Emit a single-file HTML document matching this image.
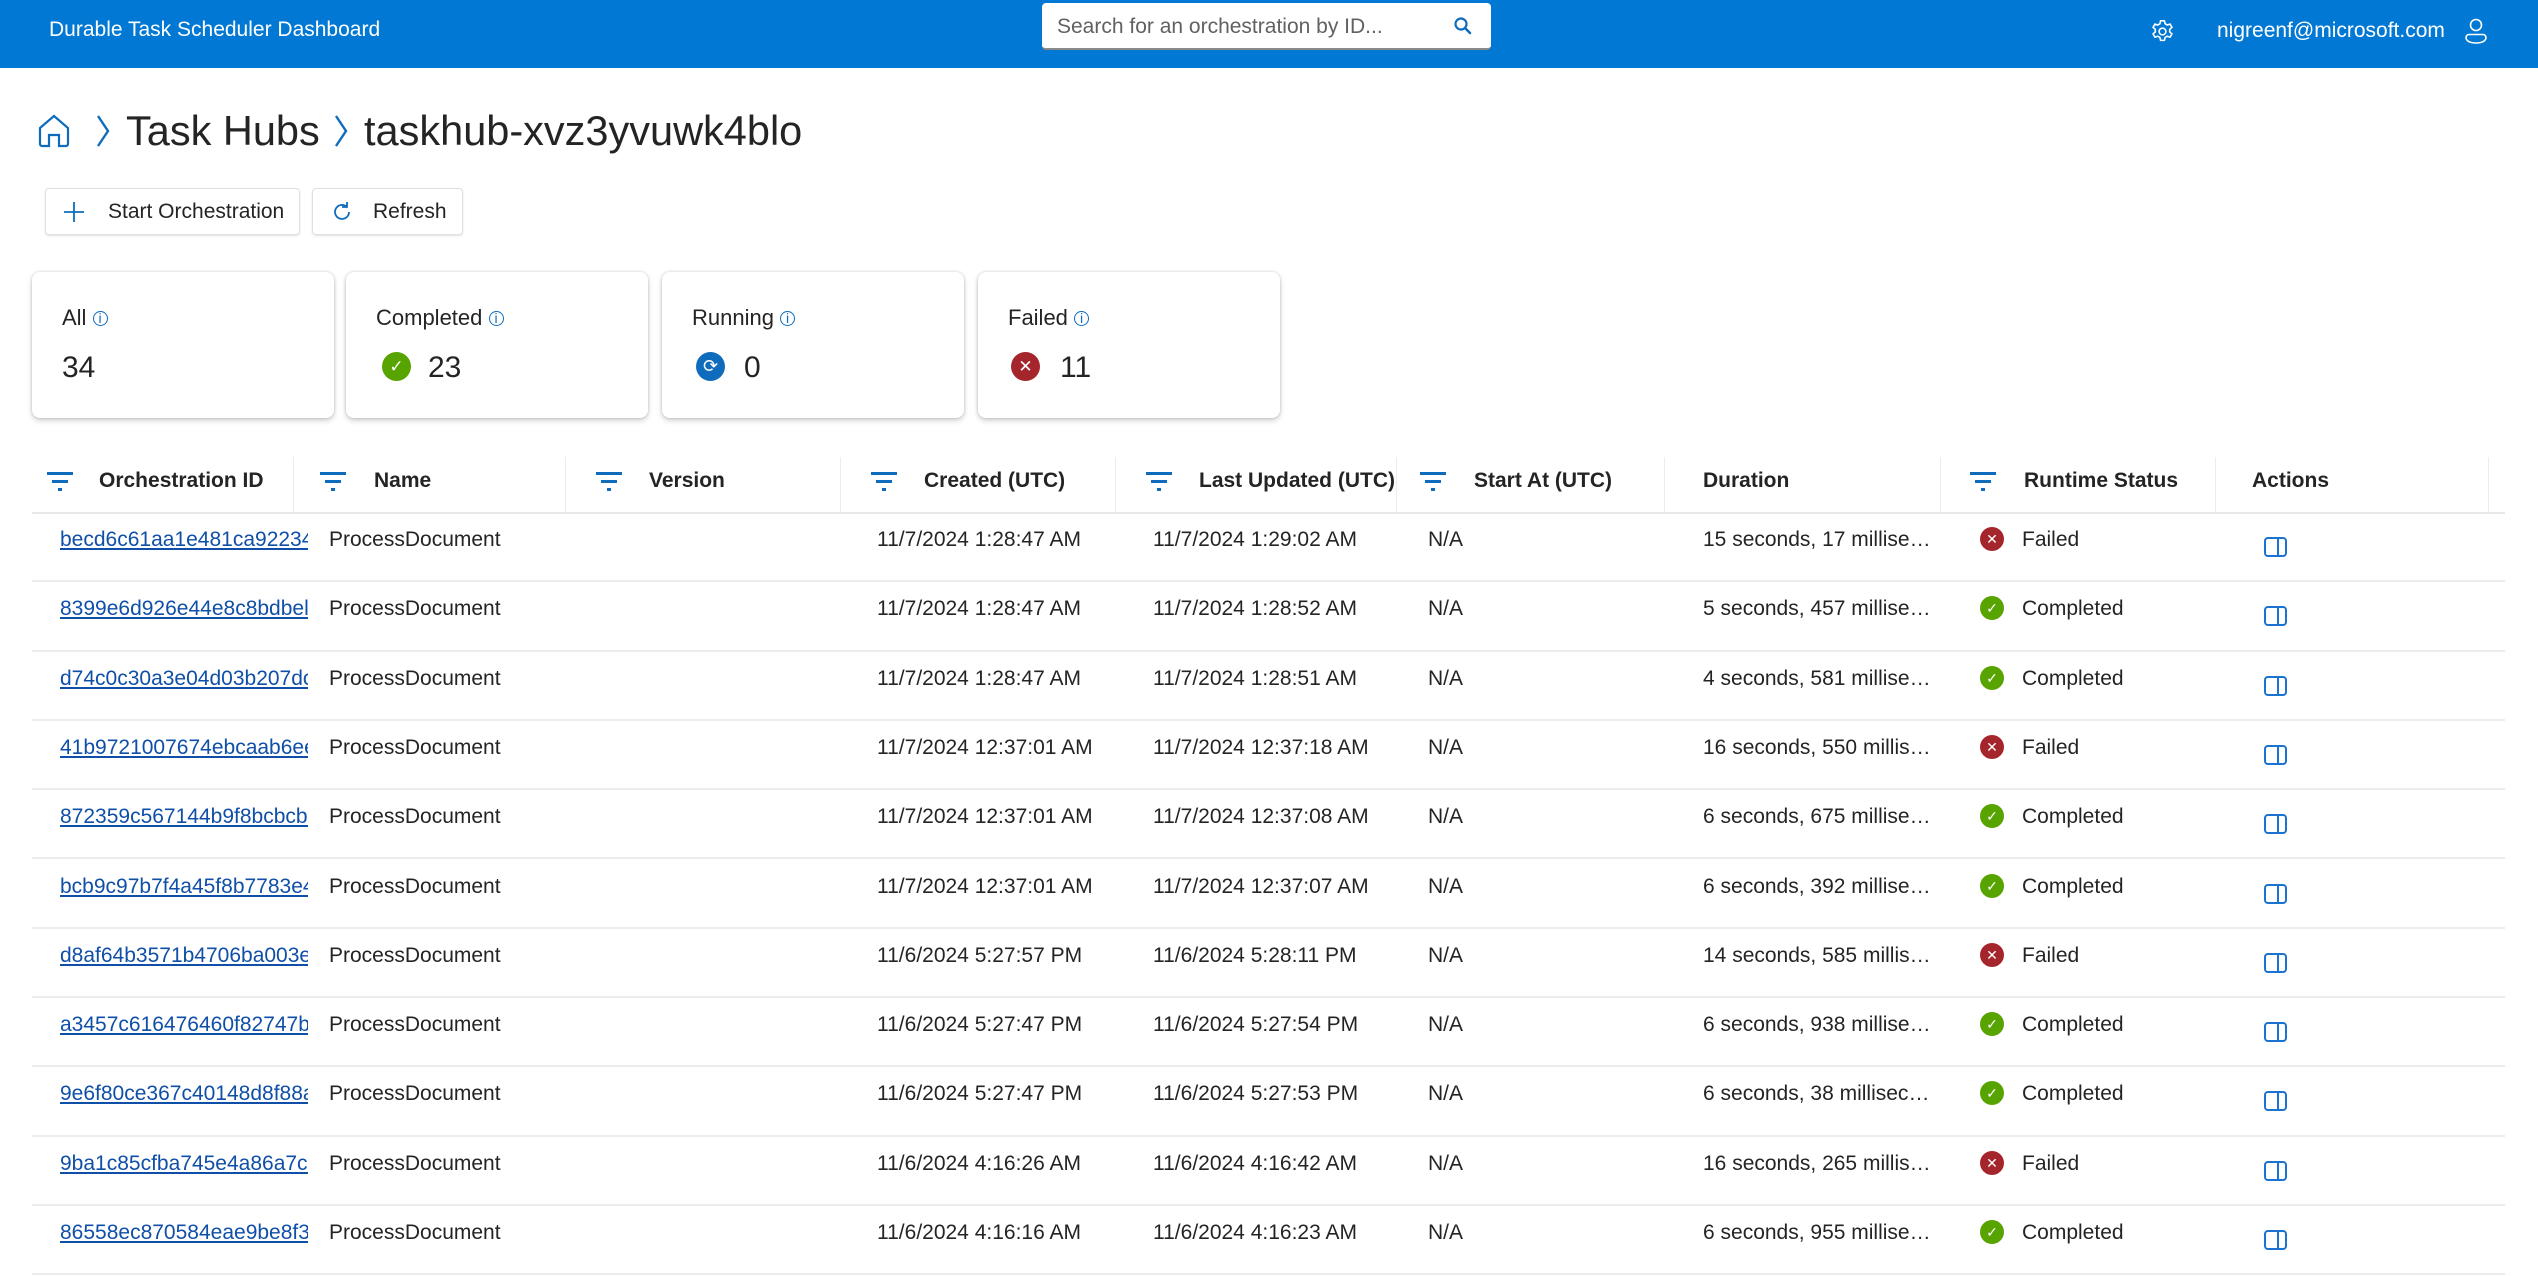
<!DOCTYPE html>
<html><head><meta charset="utf-8"><style>
*{box-sizing:border-box;margin:0;padding:0}
body{width:2538px;height:1276px;overflow:hidden;background:#fff;font-family:"Liberation Sans",Arial,sans-serif;color:#242424;position:relative}
.a{position:absolute;white-space:nowrap}
.hdr{position:absolute;left:0;top:0;width:2538px;height:68px;background:#0078d4}
.card{position:absolute;top:272px;width:302px;height:146px;background:#fff;border-radius:8px;box-shadow:0 0 3px rgba(0,0,0,.18),0 3px 6px rgba(0,0,0,.16)}
.card .l{position:absolute;left:30px;top:33px;font-size:22px}
.card .v{position:absolute;left:30px;top:79px;font-size:30px}
.btn{position:absolute;top:188px;height:47px;border:1px solid #e0e0e0;border-radius:4px;box-shadow:0 1px 2px rgba(0,0,0,.12);font-size:21px;line-height:45px}
.th{position:absolute;top:469px;font-size:21px;font-weight:bold}
.sep{position:absolute;top:457px;width:1px;height:56px;background:#ececec}
.row{position:absolute;left:32px;width:2473px;height:69.3px;border-bottom:2px solid #ececec}
.c{position:absolute;top:15px;font-size:21px;white-space:nowrap;overflow:hidden}
.id{left:28px;width:248px;color:#0f4fa8;text-decoration:underline}
.dur{left:1671px;width:228px;text-overflow:ellipsis}
.st{position:absolute;left:1948px;top:14px;width:24px;height:24px;border-radius:50%}
.ok{background:#57a300}.bad{background:#a4262c}
.act{position:absolute;left:2232px;top:24px;width:23px;height:20px;border:2px solid #1a73d0;border-radius:4px}
.act:after{content:"";position:absolute;left:11px;top:0;width:2px;height:16px;background:#1a73d0}
.st:after{position:absolute;left:0;top:0;width:24px;height:24px;color:#fff;font-size:14px;text-align:center;line-height:24px}
.ok:after{content:"✓"}.bad:after{content:"✕"}
</style></head><body>
<div class="hdr"></div>
<div class="a" style="left:49px;top:18px;font-size:21px;color:#fff">Durable Task Scheduler Dashboard</div>
<div class="a" style="left:1042px;top:3px;width:449px;height:47px;background:#fff;border-radius:4px;border-bottom:2px solid #8a8a8a"></div>
<div class="a" style="left:1057px;top:15px;font-size:21px;color:#616161">Search for an orchestration by ID...</div>
<svg class="a" style="left:1453px;top:16px" width="20" height="20" viewBox="0 0 20 20"><circle cx="8" cy="8" r="5.5" fill="none" stroke="#0f6cbd" stroke-width="2.2"/><path d="M12 12l5 5" stroke="#0f6cbd" stroke-width="2.5" stroke-linecap="round"/></svg>
<svg class="a" style="left:2149px;top:18px" width="27" height="27" viewBox="0 0 24 24" fill="none" stroke="#fff" stroke-width="1.4"><circle cx="12" cy="12" r="3"/><path d="M10.3 2.5h3.4l.6 2.6 1.9 1.1 2.5-.8 1.7 2.9-2 1.8v2.2l2 1.8-1.7 2.9-2.5-.8-1.9 1.1-.6 2.6h-3.4l-.6-2.6-1.9-1.1-2.5.8-1.7-2.9 2-1.8v-2.2l-2-1.8 1.7-2.9 2.5.8 1.9-1.1z"/></svg>
<div class="a" style="left:2217px;top:19px;font-size:21px;color:#fff">nigreenf@microsoft.com</div>
<svg class="a" style="left:2463px;top:17px" width="26" height="28" viewBox="0 0 26 28" fill="none" stroke="#fff" stroke-width="1.6"><circle cx="13" cy="8" r="5.5"/><path d="M3 20.5a3 3 0 0 1 3-3h14a3 3 0 0 1 3 3c0 3.5-4 5.5-10 5.5S3 24 3 20.5z"/></svg>

<svg class="a" style="left:37px;top:113px" width="34" height="36" viewBox="0 0 34 36" fill="none" stroke="#0f6cbd" stroke-width="2.2"><path d="M3 15L17 3l14 12v16a2 2 0 0 1-2 2h-7V22h-10v11H5a2 2 0 0 1-2-2z"/></svg>
<svg class="a" style="left:95px;top:114px" width="16" height="34" viewBox="0 0 16 34"><path d="M3 2l10 15-10 15" fill="none" stroke="#0f6cbd" stroke-width="2.4"/></svg>
<div class="a" style="left:126px;top:107px;font-size:41.5px">Task Hubs</div>
<svg class="a" style="left:333px;top:114px" width="16" height="34" viewBox="0 0 16 34"><path d="M3 2l10 15-10 15" fill="none" stroke="#0f6cbd" stroke-width="2.4"/></svg>
<div class="a" style="left:364px;top:107px;font-size:41.5px">taskhub-xvz3yvuwk4blo</div>

<div class="btn" style="left:45px;width:255px"><svg class="a" style="left:16px;top:11px" width="24" height="24" viewBox="0 0 24 24"><path d="M12 2v20M2 12h20" stroke="#0f6cbd" stroke-width="1.8"/></svg><span class="a" style="left:62px">Start Orchestration</span></div>
<div class="btn" style="left:312px;width:151px"><svg class="a" style="left:17px;top:11px" width="24" height="24" viewBox="0 0 24 24" fill="none" stroke="#0f6cbd" stroke-width="1.8"><path d="M19 12a7 7 0 1 1-2.5-5.4"/><path d="M17 2v5h-5"/></svg><span class="a" style="left:60px">Refresh</span></div>

<div class="card" style="left:32px"><div class="l">All <span style="color:#0f6cbd;font-size:14px;border:1.5px solid #0f6cbd;border-radius:50%;display:inline-block;width:15px;height:15px;line-height:12px;text-align:center;vertical-align:2px">i</span></div><div class="v">34</div></div>
<div class="card" style="left:346px"><div class="l">Completed <span style="color:#0f6cbd;font-size:14px;border:1.5px solid #0f6cbd;border-radius:50%;display:inline-block;width:15px;height:15px;line-height:12px;text-align:center;vertical-align:2px">i</span></div><div class="a" style="left:36px;top:80px;width:29px;height:29px;border-radius:50%;background:#57a300;color:#fff;font-size:17px;text-align:center;line-height:29px">✓</div><div class="v" style="left:82px">23</div></div>
<div class="card" style="left:662px"><div class="l">Running <span style="color:#0f6cbd;font-size:14px;border:1.5px solid #0f6cbd;border-radius:50%;display:inline-block;width:15px;height:15px;line-height:12px;text-align:center;vertical-align:2px">i</span></div><div class="a" style="left:34px;top:80px;width:29px;height:29px;border-radius:50%;background:#0f6cbd;color:#fff;font-size:18px;text-align:center;line-height:29px">⟳</div><div class="v" style="left:82px">0</div></div>
<div class="card" style="left:978px"><div class="l">Failed <span style="color:#0f6cbd;font-size:14px;border:1.5px solid #0f6cbd;border-radius:50%;display:inline-block;width:15px;height:15px;line-height:12px;text-align:center;vertical-align:2px">i</span></div><div class="a" style="left:33px;top:80px;width:29px;height:29px;border-radius:50%;background:#a4262c;color:#fff;font-size:17px;text-align:center;line-height:29px">✕</div><div class="v" style="left:82px">11</div></div>

<div class="a" style="left:32px;top:512px;width:2473px;height:2px;background:#e8e8e8"></div>
<div class="sep" style="left:293px"></div><div class="sep" style="left:565px"></div><div class="sep" style="left:840px"></div><div class="sep" style="left:1115px"></div><div class="sep" style="left:1396px"></div><div class="sep" style="left:1664px"></div><div class="sep" style="left:1940px"></div><div class="sep" style="left:2215px"></div><div class="sep" style="left:2488px"></div>
<svg width="0" height="0" style="position:absolute"><defs><g id="f"><rect x="0" y="0" width="26" height="3" fill="#0f6cbd"/><rect x="5" y="8" width="16" height="3" fill="#0f6cbd"/><rect x="11" y="16" width="4" height="3" fill="#0f6cbd"/></g></defs></svg>
<svg class="a" style="left:47px;top:472px" width="26" height="20"><use href="#f"/></svg>
<svg class="a" style="left:320px;top:472px" width="26" height="20"><use href="#f"/></svg>
<svg class="a" style="left:596px;top:472px" width="26" height="20"><use href="#f"/></svg>
<svg class="a" style="left:871px;top:472px" width="26" height="20"><use href="#f"/></svg>
<svg class="a" style="left:1146px;top:472px" width="26" height="20"><use href="#f"/></svg>
<svg class="a" style="left:1420px;top:472px" width="26" height="20"><use href="#f"/></svg>
<svg class="a" style="left:1970px;top:472px" width="26" height="20"><use href="#f"/></svg>
<div class="th" style="left:99px">Orchestration ID</div>
<div class="th" style="left:374px">Name</div>
<div class="th" style="left:649px">Version</div>
<div class="th" style="left:924px">Created (UTC)</div>
<div class="th" style="left:1199px">Last Updated (UTC)</div>
<div class="th" style="left:1474px">Start At (UTC)</div>
<div class="th" style="left:1703px">Duration</div>
<div class="th" style="left:2024px">Runtime Status</div>
<div class="th" style="left:2252px">Actions</div>

<div class="row" style="top:513px"><div class="c id">becd6c61aa1e481ca92234ab</div><div class="c" style="left:297px">ProcessDocument</div><div class="c" style="left:845px">11/7/2024 1:28:47 AM</div><div class="c" style="left:1121px">11/7/2024 1:29:02 AM</div><div class="c" style="left:1396px">N/A</div><div class="c dur">15 seconds, 17 milliseconds</div><div class="st bad"></div><div class="c" style="left:1990px">Failed</div><div class="act"></div></div>
<div class="row" style="top:582.3px"><div class="c id">8399e6d926e44e8c8bdbel2a</div><div class="c" style="left:297px">ProcessDocument</div><div class="c" style="left:845px">11/7/2024 1:28:47 AM</div><div class="c" style="left:1121px">11/7/2024 1:28:52 AM</div><div class="c" style="left:1396px">N/A</div><div class="c dur">5 seconds, 457 milliseconds</div><div class="st ok"></div><div class="c" style="left:1990px">Completed</div><div class="act"></div></div>
<div class="row" style="top:651.6px"><div class="c id">d74c0c30a3e04d03b207dc1</div><div class="c" style="left:297px">ProcessDocument</div><div class="c" style="left:845px">11/7/2024 1:28:47 AM</div><div class="c" style="left:1121px">11/7/2024 1:28:51 AM</div><div class="c" style="left:1396px">N/A</div><div class="c dur">4 seconds, 581 milliseconds</div><div class="st ok"></div><div class="c" style="left:1990px">Completed</div><div class="act"></div></div>
<div class="row" style="top:720.9px"><div class="c id">41b9721007674ebcaab6ee1</div><div class="c" style="left:297px">ProcessDocument</div><div class="c" style="left:845px">11/7/2024 12:37:01 AM</div><div class="c" style="left:1121px">11/7/2024 12:37:18 AM</div><div class="c" style="left:1396px">N/A</div><div class="c dur">16 seconds, 550 milliseconds</div><div class="st bad"></div><div class="c" style="left:1990px">Failed</div><div class="act"></div></div>
<div class="row" style="top:790.2px"><div class="c id">872359c567144b9f8bcbcb1</div><div class="c" style="left:297px">ProcessDocument</div><div class="c" style="left:845px">11/7/2024 12:37:01 AM</div><div class="c" style="left:1121px">11/7/2024 12:37:08 AM</div><div class="c" style="left:1396px">N/A</div><div class="c dur">6 seconds, 675 milliseconds</div><div class="st ok"></div><div class="c" style="left:1990px">Completed</div><div class="act"></div></div>
<div class="row" style="top:859.5px"><div class="c id">bcb9c97b7f4a45f8b7783e41</div><div class="c" style="left:297px">ProcessDocument</div><div class="c" style="left:845px">11/7/2024 12:37:01 AM</div><div class="c" style="left:1121px">11/7/2024 12:37:07 AM</div><div class="c" style="left:1396px">N/A</div><div class="c dur">6 seconds, 392 milliseconds</div><div class="st ok"></div><div class="c" style="left:1990px">Completed</div><div class="act"></div></div>
<div class="row" style="top:928.8px"><div class="c id">d8af64b3571b4706ba003e1</div><div class="c" style="left:297px">ProcessDocument</div><div class="c" style="left:845px">11/6/2024 5:27:57 PM</div><div class="c" style="left:1121px">11/6/2024 5:28:11 PM</div><div class="c" style="left:1396px">N/A</div><div class="c dur">14 seconds, 585 milliseconds</div><div class="st bad"></div><div class="c" style="left:1990px">Failed</div><div class="act"></div></div>
<div class="row" style="top:998.1px"><div class="c id">a3457c616476460f82747b1</div><div class="c" style="left:297px">ProcessDocument</div><div class="c" style="left:845px">11/6/2024 5:27:47 PM</div><div class="c" style="left:1121px">11/6/2024 5:27:54 PM</div><div class="c" style="left:1396px">N/A</div><div class="c dur">6 seconds, 938 milliseconds</div><div class="st ok"></div><div class="c" style="left:1990px">Completed</div><div class="act"></div></div>
<div class="row" style="top:1067.4px"><div class="c id">9e6f80ce367c40148d8f88a1</div><div class="c" style="left:297px">ProcessDocument</div><div class="c" style="left:845px">11/6/2024 5:27:47 PM</div><div class="c" style="left:1121px">11/6/2024 5:27:53 PM</div><div class="c" style="left:1396px">N/A</div><div class="c dur">6 seconds, 38 milliseconds</div><div class="st ok"></div><div class="c" style="left:1990px">Completed</div><div class="act"></div></div>
<div class="row" style="top:1136.7px"><div class="c id">9ba1c85cfba745e4a86a7c1</div><div class="c" style="left:297px">ProcessDocument</div><div class="c" style="left:845px">11/6/2024 4:16:26 AM</div><div class="c" style="left:1121px">11/6/2024 4:16:42 AM</div><div class="c" style="left:1396px">N/A</div><div class="c dur">16 seconds, 265 milliseconds</div><div class="st bad"></div><div class="c" style="left:1990px">Failed</div><div class="act"></div></div>
<div class="row" style="top:1206px"><div class="c id">86558ec870584eae9be8f31</div><div class="c" style="left:297px">ProcessDocument</div><div class="c" style="left:845px">11/6/2024 4:16:16 AM</div><div class="c" style="left:1121px">11/6/2024 4:16:23 AM</div><div class="c" style="left:1396px">N/A</div><div class="c dur">6 seconds, 955 milliseconds</div><div class="st ok"></div><div class="c" style="left:1990px">Completed</div><div class="act"></div></div>
</body></html>
